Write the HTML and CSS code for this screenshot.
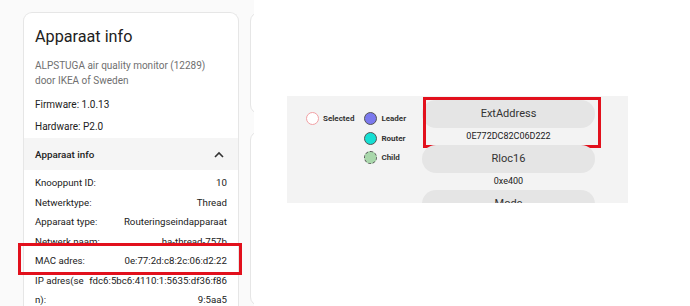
FILE: index.html
```html
<!DOCTYPE html>
<html lang="nl">
<head>
  <meta charset="UTF-8">
  <title>Apparaat info</title>
  <link rel="stylesheet" href="styles.css">
</head>
<body>
  <div class="page">

    <!-- linker schermafdruk: apparaatkaart -->
    <div class="shot-left">
      <div class="card">
        <div class="card-top">
          <h1 class="title">Apparaat info</h1>
          <div class="model">ALPSTUGA air quality monitor (12289)<br>door IKEA of Sweden</div>
          <div class="fact">Firmware: 1.0.13</div>
          <div class="fact">Hardware: P2.0</div>
        </div>
        <div class="expander">
          <span>Apparaat info</span>
          <svg class="chevron" width="10" height="7" viewBox="0 0 10 7">
            <path d="M1 6 L5 2 L9 6" fill="none" stroke="#333" stroke-width="1.6"/>
          </svg>
        </div>
        <div class="rows">
          <div class="row"><span>Knooppunt ID:</span><span>10</span></div>
          <div class="row"><span>Netwerktype:</span><span>Thread</span></div>
          <div class="row"><span>Apparaat type:</span><span>Routeringseindapparaat</span></div>
          <div class="row"><span>Netwerk naam:</span><span>ha-thread-757b</span></div>
          <div class="row marked"><span>MAC adres:</span><span>0e:77:2d:c8:2c:06:d2:22</span></div>
          <div class="row wrap"><span class="lbl">IP adres(sen):</span><span class="val">fdc6:5bc6:4110:1:5635:df36:f869:5aa5</span></div>
        </div>
      </div>
      <div class="side">
        <div class="side-card first"></div>
        <div class="side-card second"></div>
      </div>
    </div>

    <!-- rechter schermafdruk: thread topologie -->
    <div class="shot-right">
      <div class="legend">
        <div class="legend-col">
          <div class="item"><i class="dot selected"></i>Selected</div>
        </div>
        <div class="legend-col">
          <div class="item"><i class="dot leader"></i>Leader</div>
          <div class="item"><i class="dot router"></i>Router</div>
          <div class="item"><i class="dot child"></i>Child</div>
        </div>
      </div>
      <div class="fields">
        <div class="field marked">
          <div class="pill">ExtAddress</div>
          <div class="value">0E772DC82C06D222</div>
        </div>
        <div class="field">
          <div class="pill">Rloc16</div>
          <div class="value">0xe400</div>
        </div>
        <div class="field">
          <div class="pill">Mode</div>
        </div>
      </div>
    </div>

  </div>
</body>
</html>
```

FILE: styles.css
```css
/* pagina */
body {
  margin: 0;
  background: #fff;
  font-family: Roboto, "Liberation Sans", sans-serif;
  color: #212121;
}

.page {
  display: flex;
  gap: 33px;
  height: 306px;
  overflow: hidden;
}

/* linker deel */
.shot-left {
  width: 254px;
  height: 306px;
  background: #fafafa;
  display: flex;
  overflow: hidden;
  flex-shrink: 0;
}

.card {
  width: 215px;
  margin: 12px 0 0 23px;
  background: #fff;
  border: 1px solid #e6e6e6;
  border-bottom: none;
  border-radius: 9px 9px 0 0;
}

.card-top {
  padding: 13px 11px 0;
}

.title {
  margin: 0 0 10px;
  font-size: 16.2px;
  font-weight: 400;
  line-height: 22px;
}

.model {
  font-size: 10px;
  line-height: 15px;
  color: #6f6f6f;
  margin-bottom: 6px;
}

.fact {
  font-size: 10px;
  line-height: 22px;
}

.expander {
  height: 32px;
  background: #f5f5f5;
  display: flex;
  align-items: center;
  justify-content: space-between;
  padding: 0 14px 0 11px;
  font-size: 9.8px;
  font-weight: 500;
}

.rows {
  padding: 3px 11px 0;
}

.row {
  display: flex;
  justify-content: space-between;
  font-size: 9.7px;
  line-height: 19.5px;
  position: relative;
}

.row.wrap .lbl {
  width: 53px;
  word-break: break-all;
}

.row.wrap .val {
  width: 139px;
  text-align: right;
  word-break: break-all;
}

/* rode markering */
.marked::after {
  content: "";
  position: absolute;
  border: 3px solid #e2101c;
}

.row.marked::after {
  left: -17px;
  right: -15px;
  top: -8px;
  bottom: -4px;
}

.side {
  margin: 12px 0 0 11px;
  display: flex;
  flex-direction: column;
  gap: 17px;
}

.side-card {
  width: 20px;
  background: #fff;
  border: 1px solid #e6e6e6;
  border-radius: 9px;
}

.side-card.first {
  height: 115px;
}

.side-card.second {
  height: 200px;
}

/* rechter deel */
.shot-right {
  width: 341px;
  height: 107px;
  margin-top: 96px;
  background: #f3f3f3;
  display: flex;
  overflow: hidden;
  flex-shrink: 0;
}

.legend {
  display: flex;
  gap: 10px;
  padding: 16px 0 0 19px;
  width: 116px;
  box-sizing: border-box;
}

.legend-col {
  display: flex;
  flex-direction: column;
  gap: 6.5px;
}

.item {
  display: flex;
  align-items: center;
  gap: 4px;
  font-size: 8px;
  font-weight: 700;
  color: #333;
  height: 13px;
}

.dot {
  width: 13px;
  height: 13px;
  border-radius: 50%;
  box-sizing: border-box;
}

.dot.selected {
  background: #fff;
  border: 1px solid #f2a0a4;
}

.dot.leader {
  background: #7b79ee;
  border: 1px solid #555;
}

.dot.router {
  background: #15dfd3;
  border: 1px solid #555;
}

.dot.child {
  background: #a9d7ab;
  border: 1px dashed #555;
}

.fields {
  width: 173px;
  margin-left: 19px;
  padding-top: 4px;
}

.field {
  position: relative;
}

.pill {
  height: 28px;
  line-height: 28px;
  border-radius: 14px;
  background: #e5e5e5;
  text-align: center;
  font-size: 11px;
  color: #333;
}

.value {
  height: 17px;
  line-height: 17px;
  text-align: center;
  font-size: 9px;
  color: #222;
}

.field.marked::after {
  left: 1px;
  right: -6px;
  top: -3px;
  bottom: -3px;
}
```
